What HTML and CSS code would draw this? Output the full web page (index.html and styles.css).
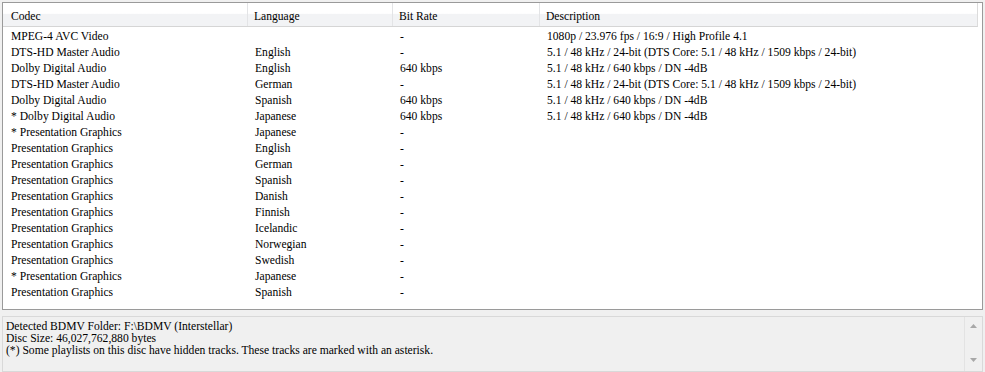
FILE: index.html
```html
<!DOCTYPE html>
<html>
<head>
<meta charset="utf-8">
<link rel="stylesheet" href="styles.css">
</head>
<body>
<div class="app">
  <div class="list">
    <div class="row head">
      <div class="c c1">Codec</div>
      <div class="c c2">Language</div>
      <div class="c c3">Bit Rate</div>
      <div class="c c4">Description</div>
    </div>
    <div class="rows">
    <div class="row"><div class="c c1">MPEG-4 AVC Video</div><div class="c c2"></div><div class="c c3">-</div><div class="c c4">1080p / 23.976 fps / 16:9 / High Profile 4.1</div></div>
    <div class="row"><div class="c c1">DTS-HD Master Audio</div><div class="c c2">English</div><div class="c c3">-</div><div class="c c4">5.1 / 48 kHz / 24-bit (DTS Core: 5.1 / 48 kHz / 1509 kbps / 24-bit)</div></div>
    <div class="row"><div class="c c1">Dolby Digital Audio</div><div class="c c2">English</div><div class="c c3">640 kbps</div><div class="c c4">5.1 / 48 kHz / 640 kbps / DN -4dB</div></div>
    <div class="row"><div class="c c1">DTS-HD Master Audio</div><div class="c c2">German</div><div class="c c3">-</div><div class="c c4">5.1 / 48 kHz / 24-bit (DTS Core: 5.1 / 48 kHz / 1509 kbps / 24-bit)</div></div>
    <div class="row"><div class="c c1">Dolby Digital Audio</div><div class="c c2">Spanish</div><div class="c c3">640 kbps</div><div class="c c4">5.1 / 48 kHz / 640 kbps / DN -4dB</div></div>
    <div class="row"><div class="c c1">* Dolby Digital Audio</div><div class="c c2">Japanese</div><div class="c c3">640 kbps</div><div class="c c4">5.1 / 48 kHz / 640 kbps / DN -4dB</div></div>
    <div class="row"><div class="c c1">* Presentation Graphics</div><div class="c c2">Japanese</div><div class="c c3">-</div><div class="c c4"></div></div>
    <div class="row"><div class="c c1">Presentation Graphics</div><div class="c c2">English</div><div class="c c3">-</div><div class="c c4"></div></div>
    <div class="row"><div class="c c1">Presentation Graphics</div><div class="c c2">German</div><div class="c c3">-</div><div class="c c4"></div></div>
    <div class="row"><div class="c c1">Presentation Graphics</div><div class="c c2">Spanish</div><div class="c c3">-</div><div class="c c4"></div></div>
    <div class="row"><div class="c c1">Presentation Graphics</div><div class="c c2">Danish</div><div class="c c3">-</div><div class="c c4"></div></div>
    <div class="row"><div class="c c1">Presentation Graphics</div><div class="c c2">Finnish</div><div class="c c3">-</div><div class="c c4"></div></div>
    <div class="row"><div class="c c1">Presentation Graphics</div><div class="c c2">Icelandic</div><div class="c c3">-</div><div class="c c4"></div></div>
    <div class="row"><div class="c c1">Presentation Graphics</div><div class="c c2">Norwegian</div><div class="c c3">-</div><div class="c c4"></div></div>
    <div class="row"><div class="c c1">Presentation Graphics</div><div class="c c2">Swedish</div><div class="c c3">-</div><div class="c c4"></div></div>
    <div class="row"><div class="c c1">* Presentation Graphics</div><div class="c c2">Japanese</div><div class="c c3">-</div><div class="c c4"></div></div>
    <div class="row"><div class="c c1">Presentation Graphics</div><div class="c c2">Spanish</div><div class="c c3">-</div><div class="c c4"></div></div>
    </div>
  </div>
  <div class="info">
    <div class="info-text">
      <div>Detected BDMV Folder: F:\BDMV (Interstellar)</div>
      <div>Disc Size: 46,027,762,880 bytes</div>
      <div>(*) Some playlists on this disc have hidden tracks. These tracks are marked with an asterisk.</div>
    </div>
    <div class="scroll">
      <svg class="arrow" width="7" height="4" viewBox="0 0 7 4"><path d="M0 4 L3.5 0 L7 4 Z" fill="#a8a8a8"/></svg>
      <svg class="arrow" width="7" height="4" viewBox="0 0 7 4"><path d="M0 0 L3.5 4 L7 0 Z" fill="#a8a8a8"/></svg>
    </div>
  </div>
</div>
</body>
</html>
```
FILE: styles.css
```css
html, body {
  margin: 0;
  padding: 0;
  background: #f0f0f0;
}
body {
  font-family: "Liberation Serif", "Times New Roman", serif;
  font-size: 11.6px;
  color: #000;
}
.app {
  width: 985px;
  height: 372px;
  padding: 2px 2px 0 2px;
  box-sizing: border-box;
  display: flex;
  flex-direction: column;
  gap: 6px;
}
.list {
  height: 308px;
  box-sizing: border-box;
  background: #fff;
  border: 1px solid #9a9a9a;
  display: flex;
  flex-direction: column;
}
.rows {
  padding-top: 2px;
  display: flex;
  flex-direction: column;
}
.row {
  display: flex;
  height: 16px;
  line-height: 16px;
  white-space: nowrap;
}
.row.head {
  height: 21px;
  padding-top: 2px;
  line-height: 24px;
  margin-right: 4px;
  background: linear-gradient(to bottom, #ffffff 0%, #ffffff 45%, #f2f3f5 50%, #f2f3f5 100%);
  border-bottom: 1px solid #d5d5d5;
  border-right: 1px solid #dcdcdc;
}
.c {
  box-sizing: border-box;
  overflow: hidden;
}
.c1 { width: 245px; padding-left: 8px; }
.c2 { width: 145px; padding-left: 7px; }
.c3 { width: 147px; padding-left: 7px; }
.c4 { flex: 1; padding-left: 7px; }
.head .c {
  margin-top: -2px;
  padding-top: 2px;
}
.head .c1, .head .c2, .head .c3 {
  border-right: 1px solid #e3e4e6;
}
.head .c2, .head .c3, .head .c4 {
  padding-left: 6px;
}
.info {
  height: 56px;
  box-sizing: border-box;
  border: 1px solid #d9d9d9;
  background: #f0f0f0;
  display: flex;
}
.info-text {
  flex: 1;
  padding: 4px 0 0 3px;
  line-height: 12px;
  white-space: nowrap;
}
.scroll {
  width: 16px;
  margin-right: 1px;
  border-left: 1px solid #e3e3e3;
  display: flex;
  flex-direction: column;
  justify-content: space-between;
  align-items: center;
  padding: 7px 0 9px 0;
}
.arrow { display: block; }
```
